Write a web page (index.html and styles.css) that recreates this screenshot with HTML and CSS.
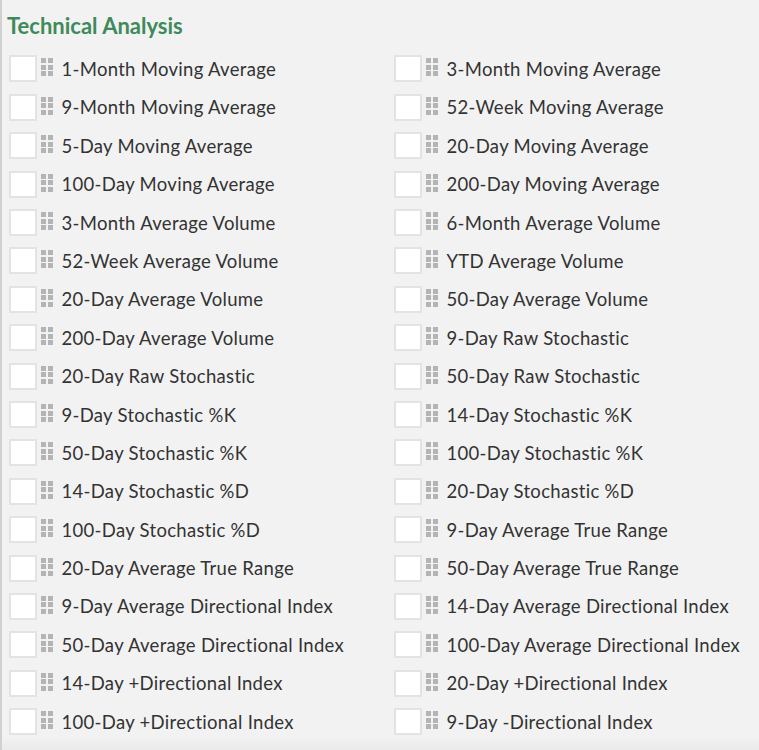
FILE: index.html
```html
<!DOCTYPE html>
<html>
<head>
<meta charset="utf-8">
<link rel="stylesheet" href="styles.css">
</head>
<body>
<div class="panel">
  <h2 class="title">Technical Analysis</h2>
  <div class="grid" id="grid">
    <div class="item"><span class="box"></span><span class="grip"><i></i><i></i><i></i><i></i><i></i><i></i></span><span class="label">1-Month Moving Average</span></div>
    <div class="item"><span class="box"></span><span class="grip"><i></i><i></i><i></i><i></i><i></i><i></i></span><span class="label">3-Month Moving Average</span></div>
    <div class="item"><span class="box"></span><span class="grip"><i></i><i></i><i></i><i></i><i></i><i></i></span><span class="label">9-Month Moving Average</span></div>
    <div class="item"><span class="box"></span><span class="grip"><i></i><i></i><i></i><i></i><i></i><i></i></span><span class="label">52-Week Moving Average</span></div>
    <div class="item"><span class="box"></span><span class="grip"><i></i><i></i><i></i><i></i><i></i><i></i></span><span class="label">5-Day Moving Average</span></div>
    <div class="item"><span class="box"></span><span class="grip"><i></i><i></i><i></i><i></i><i></i><i></i></span><span class="label">20-Day Moving Average</span></div>
    <div class="item"><span class="box"></span><span class="grip"><i></i><i></i><i></i><i></i><i></i><i></i></span><span class="label">100-Day Moving Average</span></div>
    <div class="item"><span class="box"></span><span class="grip"><i></i><i></i><i></i><i></i><i></i><i></i></span><span class="label">200-Day Moving Average</span></div>
    <div class="item"><span class="box"></span><span class="grip"><i></i><i></i><i></i><i></i><i></i><i></i></span><span class="label">3-Month Average Volume</span></div>
    <div class="item"><span class="box"></span><span class="grip"><i></i><i></i><i></i><i></i><i></i><i></i></span><span class="label">6-Month Average Volume</span></div>
    <div class="item"><span class="box"></span><span class="grip"><i></i><i></i><i></i><i></i><i></i><i></i></span><span class="label">52-Week Average Volume</span></div>
    <div class="item"><span class="box"></span><span class="grip"><i></i><i></i><i></i><i></i><i></i><i></i></span><span class="label">YTD Average Volume</span></div>
    <div class="item"><span class="box"></span><span class="grip"><i></i><i></i><i></i><i></i><i></i><i></i></span><span class="label">20-Day Average Volume</span></div>
    <div class="item"><span class="box"></span><span class="grip"><i></i><i></i><i></i><i></i><i></i><i></i></span><span class="label">50-Day Average Volume</span></div>
    <div class="item"><span class="box"></span><span class="grip"><i></i><i></i><i></i><i></i><i></i><i></i></span><span class="label">200-Day Average Volume</span></div>
    <div class="item"><span class="box"></span><span class="grip"><i></i><i></i><i></i><i></i><i></i><i></i></span><span class="label">9-Day Raw Stochastic</span></div>
    <div class="item"><span class="box"></span><span class="grip"><i></i><i></i><i></i><i></i><i></i><i></i></span><span class="label">20-Day Raw Stochastic</span></div>
    <div class="item"><span class="box"></span><span class="grip"><i></i><i></i><i></i><i></i><i></i><i></i></span><span class="label">50-Day Raw Stochastic</span></div>
    <div class="item"><span class="box"></span><span class="grip"><i></i><i></i><i></i><i></i><i></i><i></i></span><span class="label">9-Day Stochastic %K</span></div>
    <div class="item"><span class="box"></span><span class="grip"><i></i><i></i><i></i><i></i><i></i><i></i></span><span class="label">14-Day Stochastic %K</span></div>
    <div class="item"><span class="box"></span><span class="grip"><i></i><i></i><i></i><i></i><i></i><i></i></span><span class="label">50-Day Stochastic %K</span></div>
    <div class="item"><span class="box"></span><span class="grip"><i></i><i></i><i></i><i></i><i></i><i></i></span><span class="label">100-Day Stochastic %K</span></div>
    <div class="item"><span class="box"></span><span class="grip"><i></i><i></i><i></i><i></i><i></i><i></i></span><span class="label">14-Day Stochastic %D</span></div>
    <div class="item"><span class="box"></span><span class="grip"><i></i><i></i><i></i><i></i><i></i><i></i></span><span class="label">20-Day Stochastic %D</span></div>
    <div class="item"><span class="box"></span><span class="grip"><i></i><i></i><i></i><i></i><i></i><i></i></span><span class="label">100-Day Stochastic %D</span></div>
    <div class="item"><span class="box"></span><span class="grip"><i></i><i></i><i></i><i></i><i></i><i></i></span><span class="label">9-Day Average True Range</span></div>
    <div class="item"><span class="box"></span><span class="grip"><i></i><i></i><i></i><i></i><i></i><i></i></span><span class="label">20-Day Average True Range</span></div>
    <div class="item"><span class="box"></span><span class="grip"><i></i><i></i><i></i><i></i><i></i><i></i></span><span class="label">50-Day Average True Range</span></div>
    <div class="item"><span class="box"></span><span class="grip"><i></i><i></i><i></i><i></i><i></i><i></i></span><span class="label">9-Day Average Directional Index</span></div>
    <div class="item"><span class="box"></span><span class="grip"><i></i><i></i><i></i><i></i><i></i><i></i></span><span class="label">14-Day Average Directional Index</span></div>
    <div class="item"><span class="box"></span><span class="grip"><i></i><i></i><i></i><i></i><i></i><i></i></span><span class="label">50-Day Average Directional Index</span></div>
    <div class="item"><span class="box"></span><span class="grip"><i></i><i></i><i></i><i></i><i></i><i></i></span><span class="label">100-Day Average Directional Index</span></div>
    <div class="item"><span class="box"></span><span class="grip"><i></i><i></i><i></i><i></i><i></i><i></i></span><span class="label">14-Day +Directional Index</span></div>
    <div class="item"><span class="box"></span><span class="grip"><i></i><i></i><i></i><i></i><i></i><i></i></span><span class="label">20-Day +Directional Index</span></div>
    <div class="item"><span class="box"></span><span class="grip"><i></i><i></i><i></i><i></i><i></i><i></i></span><span class="label">100-Day +Directional Index</span></div>
    <div class="item"><span class="box"></span><span class="grip"><i></i><i></i><i></i><i></i><i></i><i></i></span><span class="label">9-Day -Directional Index</span></div>
  </div>
</div>
</body>
</html>
```
FILE: styles.css
```css
html, body {
  margin: 0;
  padding: 0;
  background: #f2f2f2;
}
.panel {
  height: 750px;
  box-sizing: border-box;
  border-left: 2px solid #d0d0d0;
  background: linear-gradient(to bottom, #f2f2f2 0, #f2f2f2 735px, #ebebeb 750px);
  font-family: Lato, "Open Sans", sans-serif;
  overflow: hidden;
}
.title {
  margin: 0;
  padding: 13px 0 0 5px;
  height: 49.8px;
  box-sizing: border-box;
  font-size: 22px;
  font-weight: bold;
  color: #3e8a5b;
  line-height: 26px;
}
.grid {
  display: grid;
  grid-template-columns: 385px 370px;
  grid-auto-rows: 38.4px;
  padding-left: 7px;
}
.item {
  display: flex;
  align-items: center;
}
.box {
  width: 24px;
  height: 23px;
  background: #fff;
  border: 2px solid #e3e3e3;
  flex: none;
}
.grip {
  display: grid;
  grid-template-columns: 5px 5px;
  grid-auto-rows: 5px;
  gap: 1.5px;
  margin-left: 4px;
  margin-top: -3px;
  flex: none;
}
.grip i {
  background: #b4b4b4;
}
.label {
  margin-left: 9px;
  font-size: 18.5px;
  letter-spacing: 0.3px;
  color: #333;
  white-space: nowrap;
}
```
